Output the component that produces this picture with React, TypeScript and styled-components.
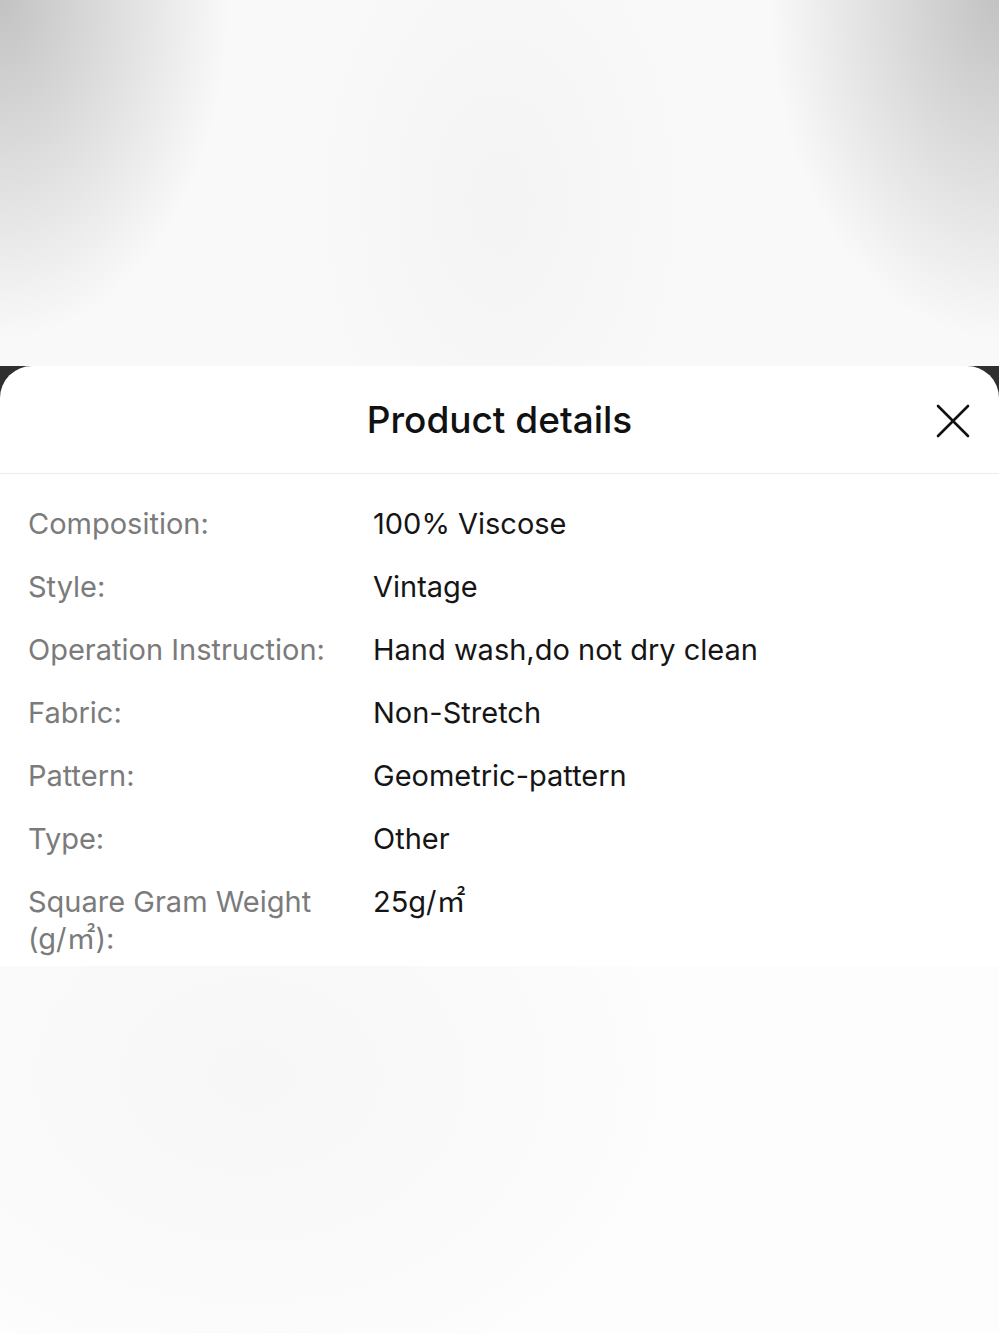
import styled, { createGlobalStyle } from "styled-components";

const GlobalStyle = createGlobalStyle`
  html, body {
    margin: 0;
    padding: 0;
    background: #fafafa;
  }
  body {
    font-family: Inter, "Noto Sans", "Noto Sans CJK SC", sans-serif;
    -webkit-font-smoothing: antialiased;
  }
`;

const Page = styled.div`
  width: 999px;
  height: 1333px;
  display: flex;
  flex-direction: column;
  overflow: hidden;
`;

const TopShade = styled.div`
  height: 366px;
  flex-shrink: 0;
  background:
    radial-gradient(ellipse 230px 340px at 0 0, rgba(0, 0, 0, 0.22), rgba(0, 0, 0, 0) 100%),
    radial-gradient(ellipse 230px 340px at 100% 0, rgba(0, 0, 0, 0.22), rgba(0, 0, 0, 0) 100%),
    radial-gradient(ellipse 200px 320px at 50% 55%, #f4f4f4, #f9f9f9 100%);
`;

const SheetBackdrop = styled.div`
  background: #2f2f2f;
`;

const Sheet = styled.div`
  background: #fff;
  border-radius: 32px 32px 0 0;
  display: flex;
  flex-direction: column;
`;

const Header = styled.div`
  height: 107px;
  display: flex;
  align-items: center;
  justify-content: center;
  position: relative;
  border-bottom: 1px solid #ececec;
`;

const Title = styled.h1`
  margin: 0;
  font-size: 37px;
  font-weight: 500;
  color: #111;
`;

const CloseButton = styled.button`
  position: absolute;
  right: 28px;
  top: 37px;
  width: 36px;
  height: 36px;
  padding: 0;
  border: none;
  background: none;
  display: flex;
  align-items: center;
  justify-content: center;
`;

const Body = styled.div`
  padding: 31px 0 9px 28px;
  display: flex;
  flex-direction: column;
  gap: 26px;
`;

const Row = styled.div`
  display: grid;
  grid-template-columns: 305px 1fr;
  column-gap: 40px;
  font-size: 29px;
  line-height: 37px;
`;

const Label = styled.div`
  color: #7b7b7b;
`;

const Unit = styled.span`
  white-space: nowrap;
`;

const Value = styled.div`
  color: #151515;
`;

const BottomShade = styled.div`
  flex: 1;
  background:
    radial-gradient(ellipse 420px 320px at 25% 30%, #f7f7f7, #fafafa 70%, #fdfdfd 100%);
`;

const details: [string, string, string?][] = [
  ["Composition:", "100% Viscose"],
  ["Style:", "Vintage"],
  ["Operation Instruction:", "Hand wash,do not dry clean"],
  ["Fabric:", "Non-Stretch"],
  ["Pattern:", "Geometric-pattern"],
  ["Type:", "Other"],
  ["Square Gram Weight", "25g/㎡", "(g/㎡):"],
];

const App = () => {
  return (
    <>
      <GlobalStyle />
      <Page>
        <TopShade />
        <SheetBackdrop>
          <Sheet>
            <Header>
              <Title>Product details</Title>
              <CloseButton aria-label="Close">
                <svg width="34" height="34" viewBox="0 0 34 34" fill="none">
                  <path d="M2 2L32 32M32 2L2 32" stroke="#111" strokeWidth="2.6" strokeLinecap="round" />
                </svg>
              </CloseButton>
            </Header>
            <Body>
              {details.map(([label, value, unit]) => (
                <Row key={label}>
                  <Label>
                    {label}
                    {unit && <> <Unit>{unit}</Unit></>}
                  </Label>
                  <Value>{value}</Value>
                </Row>
              ))}
            </Body>
          </Sheet>
        </SheetBackdrop>
        <BottomShade />
      </Page>
    </>
  );
};

export default App;
